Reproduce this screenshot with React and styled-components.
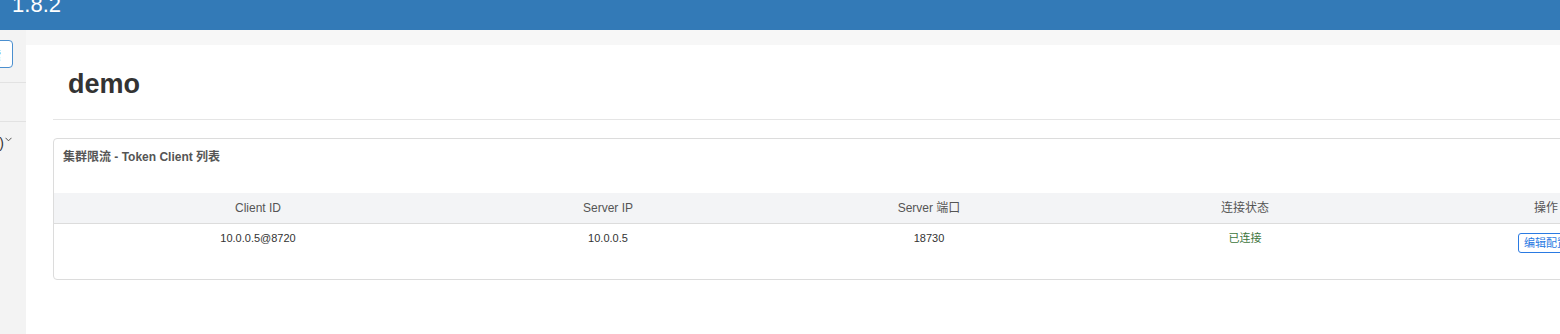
import React from "react";
import styled, { createGlobalStyle } from "styled-components";

const GlobalStyle = createGlobalStyle`
  html, body {
    margin: 0;
    padding: 0;
    overflow: hidden;
    background: #f7f7f7;
  }
  body {
    font-family: "Liberation Sans", Arial, "Noto Sans CJK SC", sans-serif;
    color: #333;
  }
  * { box-sizing: border-box; }
`;

const Page = styled.div`
  width: 1760px;
  height: 334px;
  display: flex;
  flex-direction: column;
`;

const TopBar = styled.header`
  height: 30px;
  flex: 0 0 30px;
  background: #337ab7;
  overflow: hidden;
  display: flex;
`;

const Brand = styled.div`
  width: 61px;
  margin-top: -10px;
  height: 30px;
  line-height: 30px;
  overflow: hidden;
  display: flex;
  justify-content: flex-end;
  white-space: pre;
  color: #fff;
  font-size: 22px;
`;

const Body = styled.div`
  flex: 1;
  display: flex;
  min-height: 0;
`;

const Sidebar = styled.aside`
  width: 26px;
  flex: 0 0 26px;
  background: #f3f3f3;
  overflow: hidden;
`;

const SideInner = styled.div`
  width: 220px;
  margin-left: -194px;
`;

const SearchRow = styled.div`
  display: flex;
  justify-content: flex-end;
  padding: 10px 13px 14px 0;
  border-bottom: 1px solid #e2e2e2;
`;

const SearchButton = styled.button`
  height: 28px;
  padding: 0 11px;
  border: 1px solid #4b8fcf;
  border-radius: 4px;
  background: #fff;
  color: #337ab7;
  font-family: inherit;
  font-size: 12px;
`;

const SideBlock = styled.div`
  height: 39px;
  border-bottom: 1px solid #e2e2e2;
`;

const AppItem = styled.div`
  display: flex;
  justify-content: flex-end;
  align-items: center;
  gap: 1px;
  padding: 13px 14px 0 0;
  font-size: 14px;
  line-height: 16px;
  color: #333;
`;

const Chevron = () => (
  <svg width="7" height="5" viewBox="0 0 7 5" style={{ marginTop: -8 }}>
    <path d="M0.5 0.8 L3.5 3.8 L6.5 0.8" fill="none" stroke="#555" strokeWidth="1" />
  </svg>
);

const Main = styled.main`
  flex: 1;
  padding-top: 15px;
  background: #f7f7f7;
  display: flex;
`;

const Panel = styled.section`
  flex: 1;
  background: #fff;
  padding: 0 27px;
`;

const PageHeader = styled.div`
  padding: 24px 0 20px 15px;
  border-bottom: 1px solid #e5e5e5;
`;

const Title = styled.h1`
  margin: 0;
  font-size: 27px;
  line-height: 30px;
  font-weight: bold;
  color: #333;
`;

const Card = styled.div`
  margin-top: 18px;
  width: 1654px;
  border: 1px solid #dcdcdc;
  border-radius: 4px;
  overflow: hidden;
`;

const CardTitle = styled.div`
  padding: 10px 9px 27px;
  font-size: 12px;
  line-height: 17px;
  font-weight: bold;
  color: #555;
`;

const Table = styled.table`
  border-collapse: collapse;
  table-layout: fixed;
  width: 1652px;
  font-size: 12px;
`;

const Th = styled.th`
  height: 30px;
  padding: 0;
  line-height: 30px;
  background: #f3f4f6;
  border-bottom: 1px solid #dcdcdc;
  font-weight: normal;
  color: #555;
  text-align: center;
`;

const Tr = styled.tr`
  height: 55px;
`;

const Td = styled.td`
  padding: 9px 8px 0;
  vertical-align: top;
  text-align: center;
  font-size: 11px;
  line-height: 11px;
  color: ${(p) => (p.$status ? "#3c763d" : "#333")};
`;

const EditButton = styled.button`
  display: inline-block;
  margin-top: 0;
  height: 20px;
  padding: 0 5px;
  border: 1px solid #2a7ae2;
  border-radius: 3px;
  background: #fff;
  color: #2a7ae2;
  font-family: inherit;
  font-size: 11px;
  line-height: 18px;
  white-space: nowrap;
`;

const columns = [
  { label: "Client ID", width: 408 },
  { label: "Server IP", width: 292 },
  { label: "Server 端口", width: 350 },
  { label: "连接状态", width: 282 },
  { label: "操作", width: 320 },
];

const rows = [
  { id: "10.0.0.5@8720", ip: "10.0.0.5", port: "18730", status: "已连接" },
];

export default function App() {
  return (
    <>
      <GlobalStyle />
      <Page>
        <TopBar>
          <Brand>{"Sentinel 控制台  1.8.2"}</Brand>
        </TopBar>
        <Body>
          <Sidebar>
            <SideInner>
              <SearchRow>
                <SearchButton>搜索</SearchButton>
              </SearchRow>
              <SideBlock />
              <AppItem>
                <span>demo (1/1)</span>
                <Chevron />
              </AppItem>
            </SideInner>
          </Sidebar>
          <Main>
            <Panel>
              <PageHeader>
                <Title>demo</Title>
              </PageHeader>
              <Card>
                <CardTitle>集群限流 - Token Client 列表</CardTitle>
                <Table>
                  <colgroup>
                    {columns.map((c) => (
                      <col key={c.label} style={{ width: c.width }} />
                    ))}
                  </colgroup>
                  <thead>
                    <tr>
                      {columns.map((c) => (
                        <Th key={c.label}>{c.label}</Th>
                      ))}
                    </tr>
                  </thead>
                  <tbody>
                    {rows.map((r) => (
                      <Tr key={r.id}>
                        <Td>{r.id}</Td>
                        <Td>{r.ip}</Td>
                        <Td>{r.port}</Td>
                        <Td $status>{r.status}</Td>
                        <Td>
                          <EditButton>编辑配置</EditButton>
                        </Td>
                      </Tr>
                    ))}
                  </tbody>
                </Table>
              </Card>
            </Panel>
          </Main>
        </Body>
      </Page>
    </>
  );
}
